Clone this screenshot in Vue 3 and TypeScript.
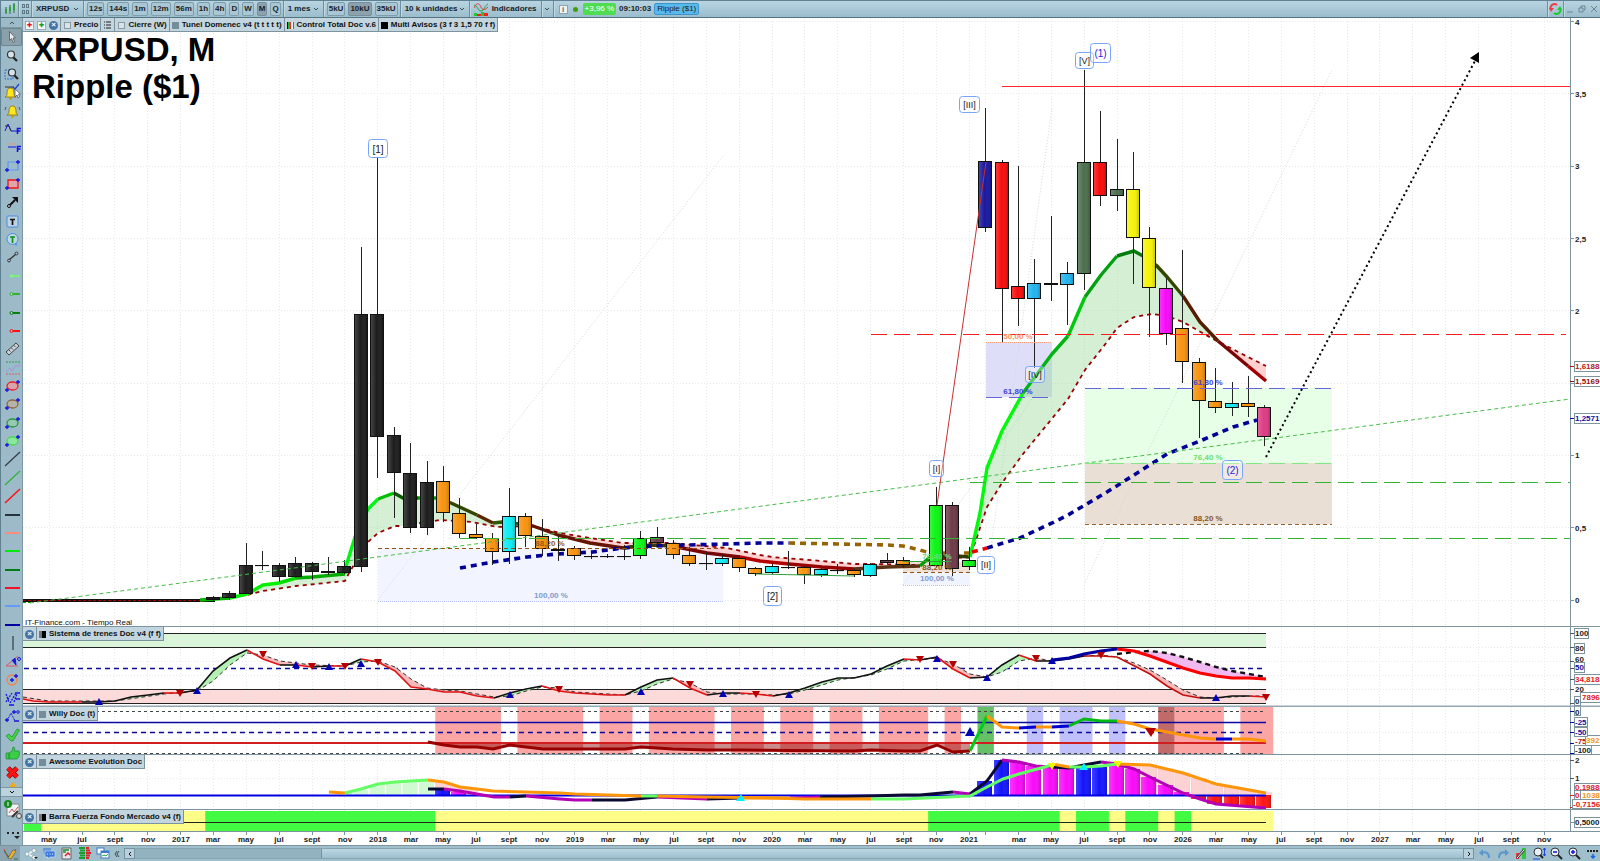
<script setup lang="ts">
import { ref } from 'vue'

type Pt = [number, number]
type Run = { c: string; p: string }

const step = 16.43
const xAt = (i: number): number => 180.6 + step * i
const yAt = (price: number): number => 600 - 144.6 * price

const parse = (s: string): Pt[] => s.trim().split(/\s+/).map((q) => q.split(',').map(Number) as Pt)
const valueAt = (line: Pt[], x: number): number => {
  for (let k = 1; k < line.length; k++) {
    if (x <= line[k][0]) {
      const [x0, y0] = line[k - 1]
      const [x1, y1] = line[k]
      return y0 + ((y1 - y0) * (x - x0)) / (x1 - x0)
    }
  }
  return line[line.length - 1][1]
}

const ticks: { x: number; t: string }[] = []
const cycle = ['', 'mar', 'may', 'jul', 'sept', 'nov']
for (let i = -8; i <= 48; i += 2) {
  const m = (((i % 12) + 12) % 12) / 2
  ticks.push({ x: xAt(i), t: m === 0 ? String(2017 + i / 12) : cycle[m] })
}
ticks.push({ x: xAt(49), t: '' })
for (let i = 51; i <= 83; i += 2) {
  const m = ((i - 49) % 12) / 2
  ticks.push({ x: xAt(i), t: m === 0 ? String(2025 + (i - 49) / 12) : cycle[m] })
}

const K = '#1c1c1c'
const O = '#f7930f'
const C = '#10ecf5'
const G = '#0cf516'
const P = '#6e3a48'
const B = '#22b4ee'
const D = '#4c6e4e'
const R = '#f80c0c'
const Y = '#f6f40a'
// index, body top, body bottom, high, low, colour
const candles: [number, number, number, number, number, string][] = [
  [2, 597, 600, 596, 601, K], [3, 593, 598, 591, 600, K], [4, 565, 594, 543, 594, K], [5, 565, 566, 551, 570, K],
  [6, 565, 577, 563, 582, K], [7, 563, 577, 557, 578, K], [8, 563, 572, 562, 580, K], [9, 571, 573, 557, 575, K],
  [10, 566, 573, 560, 574, K], [11, 314, 567, 247, 572, K], [12, 314, 437, 158, 478, K], [13, 435, 473, 427, 518, K],
  [14, 473, 528, 443, 533, K], [15, 482, 528, 461, 535, K], [16, 481, 513, 466, 522, O], [17, 513, 534, 498, 538, O],
  [18, 534, 538, 524, 539, O], [19, 538, 552, 533, 565, O], [20, 516, 552, 488, 564, C], [21, 516, 536, 513, 547, O],
  [22, 536, 549, 519, 556, O], [23, 549, 551, 535, 561, O], [24, 548, 556, 546, 560, O], [25, 556, 557, 553, 559, K],
  [26, 556, 557, 554, 558, K], [27, 556, 557, 545, 560, K], [28, 538, 556, 531, 559, G], [29, 537, 543, 527, 545, P],
  [30, 543, 555, 540, 559, O], [31, 555, 564, 547, 566, O], [32, 563, 564, 552, 570, K], [33, 558, 564, 555, 566, C],
  [34, 558, 568, 555, 572, O], [35, 568, 574, 567, 576, O], [36, 566, 573, 564, 574, C], [37, 567, 568, 551, 569, K],
  [38, 567, 575, 566, 584, O], [39, 569, 575, 568, 577, C], [40, 570, 571, 564, 574, K], [41, 570, 575, 569, 577, O],
  [42, 564, 576, 563, 577, C], [43, 560, 563, 553, 564, P], [44, 560, 565, 557, 568, O], [46, 505, 566, 487, 567, G],
  [47, 505, 569, 502, 576, P], [48, 560, 567, 547, 570, G], [49, 161, 228, 108, 232, '#1818a0'], [50, 162, 289, 160, 343, R],
  [51, 286, 299, 166, 326, R], [52, 283, 299, 259, 368, B], [53, 283, 285, 216, 301, '#a01010'], [54, 273, 285, 262, 325, B],
  [55, 162, 274, 70, 290, D], [56, 162, 196, 111, 206, R], [57, 189, 196, 139, 211, D], [58, 189, 238, 152, 284, Y],
  [59, 238, 288, 227, 337, Y], [60, 288, 334, 278, 345, '#f808f8'], [61, 328, 362, 250, 383, O], [62, 362, 401, 358, 438, O],
  [63, 401, 408, 368, 413, O], [64, 403, 408, 382, 416, C], [65, 403, 407, 376, 417, O], [66, 407, 437, 405, 446, '#dc3c84'],
]

const tunnel: Run[] = [
  { c: '#00b400', p: '200,600 230,598' },
  { c: '#00f000', p: '230,598 247,594 263,585 279,583' },
  { c: '#00dc00', p: '279,583 296,578' },
  { c: '#00aa00', p: '296,578 312,577 345,574' },
  { c: '#00f514', p: '345,574 347,563 355,537 368,509 378,499' },
  { c: '#00be00', p: '378,499 394,493' },
  { c: '#0a5a00', p: '394,493 403,498 418,498' },
  { c: '#00a000', p: '418,498 437,498' },
  { c: '#324600', p: '437,498 451,503 477,515' },
  { c: '#5a2800', p: '477,515 493,523' },
  { c: '#2d5a00', p: '493,523 502,522 520,524' },
  { c: '#641400', p: '520,524 533,526 558,535 590,543 623,548' },
  { c: '#3c3c00', p: '623,548 637,546 657,545 669,546' },
  { c: '#780505', p: '669,546 682,548 707,553 740,557' },
  { c: '#b40000', p: '740,557 760,561 789,564' },
  { c: '#960000', p: '789,564 822,567 854,569' },
  { c: '#5a3214', p: '854,569 871,568 887,567 920,566' },
  { c: '#00a000', p: '920,566 930,557' },
  { c: '#323c00', p: '930,557 957,556 970,557' },
  { c: '#00fa0a', p: '970,557 980,513 987,468 1002,431 1023,393' },
  { c: '#00b40f', p: '1023,393 1052,354 1068,336' },
  { c: '#00c80a', p: '1068,336 1085,297' },
  { c: '#00a00f', p: '1085,297 1101,275 1117,256' },
  { c: '#007d0a', p: '1117,256 1134,251 1143,256' },
  { c: '#324600', p: '1143,256 1157,266 1168,278 1183,296' },
  { c: '#551e00', p: '1183,296 1200,322 1218,341' },
  { c: '#780505', p: '1218,341 1248,366' },
  { c: '#a00000', p: '1248,366 1266,381' },
]
const stops = '200,601 247,595 263,591 296,586 345,581 349,573 368,542 378,533 395,526 402,526 427,522 440,520 472,522 497,527 533,526 560,533 590,538 623,543 668,543 682,544 727,548 760,555 772,557 822,561 854,564 871,564 920,565 930,560 970,557 977,537 987,507 1002,483 1023,454 1068,399 1085,370 1107,342 1117,328 1134,317 1152,314 1167,316 1183,322 1215,340 1248,357 1266,366'
const tunnelPts = tunnel.flatMap((r) => parse(r.p))
const stopPts = parse(stops)
const between = (a: Pt[], b: Pt[], from: number, to: number): string => {
  const xs = [...new Set([...a, ...b].map((q) => q[0]).concat([from, to]))].filter((x) => x >= from && x <= to).sort((m, n) => m - n)
  const up = xs.map((x) => `${x},${valueAt(a, x).toFixed(1)}`)
  const down = xs.reverse().map((x) => `${x},${valueAt(b, x).toFixed(1)}`)
  return [...up, ...down].join(' ')
}
const clouds = [
  { c: '#96d796', p: between(tunnelPts, stopPts, 247, 510) },
  { c: '#ff8c8c', p: between(tunnelPts, stopPts, 533, 915) },
  { c: '#96d796', p: between(tunnelPts, stopPts, 970, 1216) },
  { c: '#ff8c8c', p: between(tunnelPts, stopPts, 1217, 1266) },
]
const slow: Run[] = [
  { c: '#000096', p: '460,568 493,562 527,557 557,554 593,552 623,548 653,546 687,545 727,544 760,543 789,543' },
  { c: '#966400', p: '789,543 838,544 887,545 903,546 920,550 930,553 970,553' },
  { c: '#f00000', p: '972,552 987,548' },
  { c: '#000096', p: '987,548 1020,538 1052,523 1068,515 1085,505 1107,492 1123,482 1167,454 1200,441 1233,427 1257,420' },
]

const waves = [
  { x: 368, y: 139, w: 20, h: 19, t: '[1]', s: 10, c: '#222' },
  { x: 763, y: 586, w: 19, h: 20, t: '[2]', s: 10, c: '#222' },
  { x: 929, y: 460, w: 15, h: 17, t: '[I]', s: 9, c: '#222' },
  { x: 977, y: 556, w: 18, h: 18, t: '[II]', s: 9, c: '#222' },
  { x: 959, y: 96, w: 21, h: 17, t: '[III]', s: 9, c: '#222' },
  { x: 1025, y: 366, w: 20, h: 17, t: '[IV]', s: 9, c: '#222' },
  { x: 1075, y: 52, w: 19, h: 17, t: '[V]', s: 9, c: '#222' },
  { x: 1090, y: 43, w: 21, h: 20, t: '(1)', s: 10, c: '#2a1ae0' },
  { x: 1222, y: 460, w: 21, h: 20, t: '(2)', s: 10, c: '#2a1ae0' },
]
const fibs = [
  { x: 550, y: 546, t: '88,20 %', c: '#965a14' },
  { x: 551, y: 598, t: '100,00 %', c: '#8099cf' },
  { x: 1018, y: 339, t: '50,00 %', c: '#ff9058' },
  { x: 1018, y: 394, t: '61,80 %', c: '#4040d8' },
  { x: 1208, y: 385, t: '61,80 %', c: '#4040e0' },
  { x: 1208, y: 460, t: '76,40 %', c: '#6fdc6f' },
  { x: 1208, y: 521, t: '88,20 %', c: '#87561c' },
  { x: 937, y: 559, t: '76,40 %', c: '#6fdc6f' },
  { x: 937, y: 570, t: '88,20 %', c: '#87561c' },
  { x: 937, y: 581, t: '100,00 %', c: '#8099cf' },
]
const prices = [4, 3.5, 3, 2.5, 2, 1.5, 1, 0.5, 0]
const priceText = (v: number): string => (v === 1.5 ? '' : String(v).replace('.', ','))
const priceTags = [
  { y: 366, t: '1,6188', c: '#b01818' },
  { y: 381, t: '1,5169', c: '#901010' },
  { y: 418, t: '1,2571', c: '#1010a0' },
]

const trend: Run[] = [
  { c: '#e01414', p: '23,699 33,701 49,702 82,702' },
  { c: '#111', p: '82,702 99,702 115,701 131,697 148,695 164,693' },
  { c: '#e01414', p: '164,693 180,693' },
  { c: '#111', p: '180,693 197,690 213,671 230,658 247,650' },
  { c: '#e01414', p: '247,650 263,659 280,665' },
  { c: '#111', p: '280,665 296,665' },
  { c: '#e01414', p: '296,665 312,667' },
  { c: '#111', p: '312,667 329,666' },
  { c: '#e01414', p: '329,666 345,666' },
  { c: '#111', p: '345,666 361,659' },
  { c: '#e01414', p: '361,659 378,662 395,671 411,687 427,689 444,692 460,692 477,696 494,698' },
  { c: '#111', p: '494,698 510,693 526,689 542,686' },
  { c: '#e01414', p: '542,686 559,691 575,693 608,695 625,695' },
  { c: '#111', p: '625,695 641,687 657,680 673,678' },
  { c: '#e01414', p: '673,678 690,688 707,695' },
  { c: '#111', p: '707,695 723,693 740,693' },
  { c: '#e01414', p: '740,693 756,694 773,696' },
  { c: '#111', p: '773,696 789,693 805,688 822,682 838,678 854,678 871,674 887,666 904,659' },
  { c: '#e01414', p: '904,659 920,660' },
  { c: '#111', p: '920,660 937,657' },
  { c: '#e01414', p: '937,657 953,669 970,678' },
  { c: '#111', p: '970,678 987,677 1002,665 1019,655' },
  { c: '#e01414', p: '1019,655 1036,661' },
  { c: '#111', p: '1036,661 1052,661 1069,659 1084,656' },
  { c: '#c01010', p: '1084,656 1101,656 1117,657 1150,674 1167,686 1183,695 1200,698' },
  { c: '#111', p: '1200,698 1216,698 1232,696 1249,696' },
  { c: '#e01414', p: '1249,696 1266,697' },
]
const signal = '23,697 49,701 115,701 164,694 197,691 213,681 230,665 247,653 263,655 280,661 312,665 345,666 361,662 378,661 395,667 411,679 427,688 444,690 460,691 477,694 494,697 510,696 526,691 542,687 559,688 575,692 625,695 641,691 657,684 673,679 690,683 707,692 723,694 756,694 773,695 789,694 805,690 822,685 838,680 871,675 887,669 904,661 937,658 953,664 970,674 987,677 1002,672 1019,661 1036,658 1052,661 1084,656 1101,655 1117,657 1134,663 1150,670 1167,680 1183,690 1200,697 1216,698 1249,696 1266,696'
const signalPts = parse(signal)
const trendPts = trend.flatMap((r) => parse(r.p))
const trendFill = trendPts.slice(1).map((q, k) => {
  const a = trendPts[k]
  const s0 = valueAt(signalPts, a[0])
  const s1 = valueAt(signalPts, q[0])
  return { c: a[1] + q[1] < s0 + s1 ? '#b4f0b4' : '#f5b9b9', p: `${a[0]},${a[1]} ${q[0]},${q[1]} ${q[0]},${s1} ${a[0]},${s0}` }
})
const bigFast: Run[] = [
  { c: '#0000a0', p: '1052,660 1069,658 1084,654 1101,651 1117,649' },
  { c: '#fa0000', p: '1117,649 1134,651 1150,656 1183,668 1200,673 1216,676 1232,678 1249,678 1266,679' },
]
const bigSlow = '1117,654 1134,652 1150,651 1167,653 1183,657 1200,662 1216,667 1232,671 1249,674 1266,677'
const bigFill = between(parse(bigSlow), parse(bigFast[1].p), 1134, 1266)
const downs = parse('180,693 263,654 312,666 345,666 378,662 559,689 690,684 756,694 920,659 953,664 1036,658 1101,655 1266,697')
const ups = parse('99,702 197,691 296,665 329,667 361,664 510,695 641,692 723,694 789,695 937,659 987,678 1052,661 1216,698')

const zones: { a: number; b: number; c: string }[] = [
  ...([[16, 19], [21, 24], [26, 27], [29, 32], [34, 35], [37, 38], [40, 41], [43, 45], [47, 47], [61, 63], [65, 66]] as Pt[])
    .map(([a, b]) => ({ a, b, c: '#fba5a5' })),
  { a: 49, b: 49, c: '#66c066' },
  ...([[52, 52], [54, 55], [57, 57]] as Pt[]).map(([a, b]) => ({ a, b, c: '#c0c0fb' })),
  { a: 60, b: 60, c: '#c06a6a' },
]
const willyLow = '428,742 444,745 460,747 477,747 493,749 510,745 526,747 543,749 625,749 641,747 673,749 707,750 740,750 854,751 871,750 904,751 920,751 937,745 953,752 970,751'
const willy: Run[] = [
  { c: '#960000', p: willyLow },
  { c: '#00cd14', p: '970,751 987,716' },
  { c: '#ff960a', p: '987,716 1002,727 1019,728' },
  { c: '#0000d2', p: '1019,728 1036,727' },
  { c: '#ff960a', p: '1036,727 1052,727' },
  { c: '#0000d2', p: '1052,727 1069,726' },
  { c: '#00b914', p: '1069,726 1084,719 1101,721 1117,721' },
  { c: '#ff960a', p: '1117,721 1134,724 1150,729 1167,732 1200,738 1216,739' },
  { c: '#0000d2', p: '1216,739 1232,739' },
  { c: '#ff960a', p: '1232,739 1249,739 1266,741' },
]

const slowAo: Run[] = [
  { c: '#ff960a', p: '329,792 345,793' },
  { c: '#64ff64', p: '345,793 361,789 378,784 395,782 411,781 428,780' },
  { c: '#ff960a', p: '428,780 444,782 460,787 477,789 493,791 560,793 575,794 641,796' },
  { c: '#64ff64', p: '641,796 657,796' },
  { c: '#ff960a', p: '657,796 705,797 773,798 805,799 871,799' },
  { c: '#64ff64', p: '871,799 904,799 970,796 987,787 1003,779 1019,774 1052,765' },
  { c: '#ff960a', p: '1052,764 1069,767' },
  { c: '#64ff64', p: '1069,767 1084,767 1101,766 1117,764' },
  { c: '#ff960a', p: '1117,764 1150,765 1183,773 1216,784 1266,793' },
]
const fastAo: Run[] = [
  { c: '#0a0a32', p: '428,789 444,789' },
  { c: '#b400b4', p: '444,789 460,791 477,794 494,797 510,797' },
  { c: '#0a0a32', p: '510,797 526,796' },
  { c: '#b400b4', p: '526,796 560,799 575,800 592,800' },
  { c: '#0a0a32', p: '592,800 625,800 657,797' },
  { c: '#b400b4', p: '657,797 707,799' },
  { c: '#0a0a32', p: '707,799 740,798' },
  { c: '#ff960a', p: '740,798 790,798' },
  { c: '#b400b4', p: '790,798 820,797' },
  { c: '#0a0a32', p: '820,797 870,796 904,795 920,795 953,792' },
  { c: '#b400b4', p: '953,792 970,794' },
  { c: '#0a0a32', p: '970,794 987,781 1002,760' },
  { c: '#b400b4', p: '1002,760 1019,762 1036,766 1052,767' },
  { c: '#0a0a32', p: '1052,767 1069,768 1084,765 1101,762' },
  { c: '#b400b4', p: '1101,762 1117,764 1134,769 1150,777 1183,793 1200,799 1216,804 1266,808' },
]
const histo: [number, number, number, string][] = [
  [16, 790, 795, '#1414ff'], [17, 792, 795, '#fa0afa'], [49, 781, 795, '#1414ff'], [50, 760, 795, '#1414ff'],
  [51, 762, 795, '#fa0afa'], [52, 766, 795, '#fa0afa'], [53, 767, 795, '#fa0afa'], [54, 768, 795, '#fa0afa'],
  [55, 767, 795, '#1414ff'], [56, 767, 795, '#1414ff'], [57, 764, 795, '#fa0afa'], [58, 769, 795, '#fa0afa'],
  [59, 777, 795, '#fa0afa'], [60, 785, 795, '#fa0afa'], [61, 792, 795, '#fa0afa'], [62, 795, 799, '#ff1414'],
  [63, 795, 804, '#ff1414'], [64, 795, 806, '#ff1414'], [65, 795, 807, '#ff1414'], [66, 795, 808, '#ff1414'],
]
const aoOrange = parse(slowAo[8].p)
const pale: [number, number][] = [58, 59, 60, 61, 62, 63, 64, 65, 66].map((i) => [i, valueAt(aoOrange, xAt(i))])
const mint = parse('10,793 11,790 12,785 13,783 14,781 15,780')
const force: Pt[] = [[2, 15], [46, 53], [55, 56], [58, 59], [61, 61]]

const frames = ['12s', '144s', '1m', '12m', '56m', '1h', '4h', 'D', 'W', 'M', 'Q']
const frame = ref('M')
const sizes = ['5kU', '10kU', '35kU']
const size = ref('10kU')
const tool = ref(0)

const line = (c: string) => `<path d="M4 9H19" stroke="${c}" stroke-width="2"/>`
const ray = (c: string) => `<path d="M9 9H19" stroke="${c}" stroke-width="2"/><circle cx="10.500" cy="9" r="1.500" fill="#b8ced8" stroke="${c}"/>`
const slant = (c: string, w: number) => `<path d="M4 16L19 2" stroke="${c}" stroke-width="${w}"/>`
const plus = (x: number, y: number) => `<path d="M${x - 2} ${y}h4M${x} ${y - 2}v4" stroke="#1414e0" stroke-width="1.300"/>`
const blob = (c: string, f: string) => `<ellipse cx="11.500" cy="9" rx="5.500" ry="4" fill="${f}" stroke="${c}" stroke-width="1.300"/>${plus(6, 13)}${plus(17, 5)}`
const bell = '<path d="M6 13c2-1 2-2 2-4 0-3 1-5 3.500-5s3.500 2 3.500 5c0 2 0 3 2 4z" fill="#ffe61e" stroke="#8c6e00" stroke-width=".8"/><circle cx="11.500" cy="14.500" r="1.300" fill="#c89600"/>'
const lens = '<circle cx="10" cy="7.500" r="3.500" fill="#d5e4ea" stroke="#333" stroke-width="1.200"/><path d="M12.500 10.500L16 14" stroke="#222" stroke-width="2.200"/>'
const tools: { n: string; g: string }[] = [
  { n: 'Puntero', g: '<path d="M8.500 3.500v9l2-2 1.500 4 1.500-.7-1.500-3.800h2.500z" fill="#e8eef2" stroke="#555" stroke-width=".8"/>' },
  { n: 'Lupa', g: lens },
  { n: 'Zoom de zona', g: `<path d="M4 5h8v9H4z" fill="none" stroke="#2878d2" stroke-dasharray="2 1"/><g transform="translate(1 0)">${lens}</g>` },
  { n: 'Alerta sobre objeto', g: `<g transform="translate(-2 1)">${bell}</g><path d="M4 4h9" stroke="#333"/><path d="M12 4l2 2 4-5" stroke="#1e46d2" stroke-width="1.300"/><path d="M14 6v8l2-2 1 3 1.500-1-1-3h2z" fill="#fff" stroke="#557" stroke-width=".8"/>` },
  { n: 'Alerta', g: `${bell}<path d="M5 5l-1 3M18 5l1 3" stroke="#555"/>` },
  { n: 'Fibonacci zigzag', g: '<path d="M4 11l3-7 3 7h6" stroke="#1414e0"/><path d="M4 6h4l2 5" stroke="#333"/><path d="M16.500 14V8.500h3.500M16.500 11h3" stroke="#1414e0" stroke-width="1.600"/>' },
  { n: 'Fibonacci horizontal', g: '<path d="M7 6h10" stroke="#ff8c5a" stroke-dasharray="2 1"/><path d="M7 9h8" stroke="#1414e0"/><path d="M16.500 14V8.500H20M16.500 11h3" stroke="#1414e0" stroke-width="1.600"/>' },
  { n: 'Rectángulo azul', g: `<path d="M7 5h10v8H7z" fill="none" stroke="#5a96f5" stroke-width="1.200"/>${plus(6, 13)}${plus(17, 5)}` },
  { n: 'Rectángulo rojo', g: `<path d="M7 5h10v8H7z" fill="#e0a5aa" stroke="#f01414" stroke-width="1.300"/>${plus(6, 13)}${plus(17, 5)}` },
  { n: 'Flecha', g: '<path d="M8 13l6-6" stroke="#111" stroke-width="2"/><path d="M11 4h6v6z" fill="#111"/><circle cx="8" cy="13" r="1.500" fill="#b8ced8" stroke="#111"/>' },
  { n: 'Texto', g: '<rect x="6" y="4" width="11" height="11" rx="1" fill="#bcd2e0" stroke="#4b8ce6"/><path d="M9 7.500h5M11.500 7v6" stroke="#111" stroke-width="1.700"/>' },
  { n: 'Comentario', g: '<circle cx="11.500" cy="9" r="5.500" fill="#bcd8e0" stroke="#4b8ce6"/><path d="M13 14l3 2-.5-3" fill="#4b8ce6"/><path d="M9 7h5M11.500 7v6" stroke="#148c1e" stroke-width="1.700"/>' },
  { n: 'Segmento', g: '<path d="M8 12l7-6" stroke="#333" stroke-width="1.300"/><circle cx="8" cy="12.500" r="1.400" fill="#b8ced8" stroke="#333"/><circle cx="15.500" cy="5.500" r="1.400" fill="#b8ced8" stroke="#333"/>' },
  { n: 'Rayo verde claro', g: ray('#78f078') },
  { n: 'Rayo verde', g: ray('#32b432') },
  { n: 'Rayo verde oscuro', g: ray('#0a7d14') },
  { n: 'Rayo rojo', g: ray('#fa1414') },
  { n: 'Regla', g: '<path d="M5 12L15 3l3 3L8 15z" fill="#c8d2d8" stroke="#444"/><path d="M8 10l1.500 1.500M10.500 8l1.500 1.500M13 5.500l1.500 1.500" stroke="#444"/>' },
  { n: 'Patrón', g: '<rect x="5" y="3" width="14" height="12" fill="#96bec8"/><path d="M5 3h14" stroke="#3c9650" stroke-dasharray="2 1"/><path d="M5 15h14" stroke="#dc5a6e" stroke-dasharray="2 1"/><path d="M5 13l4-4 2 3 4-6 2 2 2-3" stroke="#b48cdc" fill="none"/>' },
  { n: 'Elipse roja', g: blob('#f01e28', '#d7a5aa') },
  { n: 'Elipse marrón', g: blob('#96643c', '#b4b4aa') },
  { n: 'Elipse verde', g: blob('#28963c', '#96c8b4') },
  { n: 'Elipse verde claro', g: blob('#46dc46', '#8ce6a0') },
  { n: 'Recta negra', g: slant('#333c46', 1.2) },
  { n: 'Recta verde', g: slant('#32b43c', 1.3) },
  { n: 'Recta roja', g: slant('#fa1414', 1.6) },
  { n: 'Horizontal negra', g: line('#28323c') },
  { n: 'Horizontal salmón', g: line('#fa8c78') },
  { n: 'Horizontal verde', g: line('#00eb0a') },
  { n: 'Horizontal verde oscuro', g: line('#007d14') },
  { n: 'Horizontal roja', g: line('#f01428') },
  { n: 'Horizontal azul', g: line('#649bfa') },
  { n: 'Horizontal marina', g: line('#0000a0') },
  { n: 'Vertical', g: '<path d="M12 2v14" stroke="#333c46" stroke-width="1.200"/>' },
  { n: 'Ángulo', g: '<path d="M17 4L5 14h12" fill="none" stroke="#e65064"/><path d="M11 8l4 5-1-7" fill="#1414e0" stroke="#1414e0"/><circle cx="18" cy="7" r="1.500" fill="none" stroke="#1414e0"/>' },
  { n: 'Círculo', g: `<circle cx="11" cy="9" r="5" fill="none" stroke="#f5824b" stroke-width="1.300"/>${plus(11, 9)}${plus(15, 5)}` },
  { n: 'Ondas de impulso', g: '<path d="M5 5l3 8M5 13l6-9M9 14l6-10M13 13l3-8" stroke="#1414e0" stroke-dasharray="2 1" stroke-width="1.300"/><path d="M14 4h5M15 10h4M8 16h5" stroke="#1414e0" stroke-width="1.500"/>' },
  { n: 'Ondas correctivas', g: `<path d="M6 14l4-8 4 8" stroke="#1414e0" stroke-dasharray="2 1" fill="none"/>${plus(13, 5)}${plus(6, 13)}<circle cx="17" cy="5" r="1.300" fill="none" stroke="#1414e0"/><path d="M13 14h5" stroke="#1414e0" stroke-width="1.500"/>` },
  { n: 'Marca válida', g: '<path d="M5 10l3-2 3 3 5-8 2.500 1L12 15h-2z" fill="#46d246" stroke="#1e963c" stroke-width=".8"/>' },
  { n: 'Pulgar arriba', g: '<path d="M5 9h3v6H5zM8 9l3-2 1-4c2 0 2 2 1.500 4H18c1 3 0 6-2 8H8z" fill="#3ccd46" stroke="#1e963c" stroke-width=".8"/>' },
  { n: 'Cruz roja', g: '<path d="M7 5l9 9M16 5l-9 9" stroke="#8c0000" stroke-width="5"/><path d="M7 5l9 9M16 5l-9 9" stroke="#fa1414" stroke-width="3.800"/>' },
]
</script>

<template>
  <div class="app">
    <header class="bar">
      <button class="flat candle-btn" aria-label="Tipo de gráfico">
        <svg width="12" height="14" viewBox="0 0 12 14"><path d="M2 5v7M6 3v9M10 1v10" stroke="#286e32" /><path d="M1 7h2v4H1zM5 5h2v4H5zM9 2h2v6H9z" fill="#32a03c" /></svg>
      </button>
      <i class="sep" />
      <button class="flat grip" aria-label="Vincular">
        <svg width="8" height="12" viewBox="0 0 8 12"><g fill="none" stroke="#5f7885"><rect x="1.500" y="1.500" width="2" height="3" /><rect x="5.500" y="1.500" width="2" height="3" /><rect x="1.500" y="7.500" width="2" height="3" /><rect x="5.500" y="7.500" width="2" height="3" /></g></svg>
      </button>
      <i class="sep" />
      <span class="pick w-symbol"><select aria-label="Valor"><option>XRPUSD</option></select><svg class="chev" viewBox="0 0 6 4"><path d="M1 1l2 2 2-2" /></svg></span>
      <i class="sep" />
      <div class="group">
        <button v-for="f in frames" :key="f" class="chip" :class="{ on: f === frame }" @click="frame = f">{{ f }}</button>
      </div>
      <i class="sep" />
      <span class="pick w-unit"><select aria-label="Unidad de tiempo"><option>1 mes</option></select><svg class="chev" viewBox="0 0 6 4"><path d="M1 1l2 2 2-2" /></svg></span>
      <i class="sep" />
      <div class="group">
        <button v-for="s in sizes" :key="s" class="chip" :class="{ on: s === size }" @click="size = s">{{ s }}</button>
      </div>
      <i class="sep" />
      <span class="pick w-amount"><select aria-label="Unidades"><option>10 k unidades</option></select><svg class="chev" viewBox="0 0 6 4"><path d="M1 1l2 2 2-2" /></svg></span>
      <i class="sep" />
      <button class="flat ind">
        <svg width="14" height="14" viewBox="0 0 14 14"><path d="M0 6c3-6 5-5 7-1s4 3 7 0" fill="none" stroke="#e63c46" /><path d="M0 3c3 0 4 6 7 6s4-6 7-7" fill="none" stroke="#28a03c" /><path d="M0 14v-3h3v3zM7 14v-4h3v4z" fill="#1ec832" /><path d="M3 14v-2h4v2zM10 14v-3h4v3z" fill="#fa1e1e" /></svg>
        Indicadores
      </button>
      <i class="sep" />
      <button class="flat drop" aria-label="Más indicadores"><svg class="chev" viewBox="0 0 6 4"><path d="M1 1l2 2 2-2" /></svg></button>
      <i class="sep" />
      <div class="status">
        <button class="info" aria-label="Información">i</button>
        <i class="live" />
        <span class="gain">+3,96 %</span>
        <span class="clock">09:10:03</span>
        <span class="asset">Ripple ($1)</span>
      </div>
      <span class="grow" />
      <i class="sep" />
      <button class="flat sync" aria-label="Sincronizar">
        <svg width="13" height="12" viewBox="0 0 13 12"><path d="M2 7a4 4 0 0 1 6-5" fill="none" stroke="#f03c46" stroke-width="2" /><path d="M0 5h5L2 9z" fill="#f03c46" /><path d="M11 5a4 4 0 0 1-6 5" fill="none" stroke="#1ec82d" stroke-width="2" /><path d="M13 7H8l3-4z" fill="#1ec82d" /></svg>
      </button>
      <i class="sep" />
      <div class="win">
        <button class="flat" aria-label="Minimizar"><svg viewBox="0 0 8 8"><path d="M1 7h6" /></svg></button>
        <button class="flat" aria-label="Restaurar"><svg viewBox="0 0 8 8"><path d="M3 3V1h4v4H6M1 3h4v4H1z" /></svg></button>
        <button class="flat" aria-label="Cerrar"><svg viewBox="0 0 8 8"><path d="M1 1l6 6M7 1L1 7" /></svg></button>
      </div>
    </header>

    <div class="body">
      <aside class="side">
        <button class="flat fold" aria-label="Subir"><svg class="chev" viewBox="0 0 6 4"><path d="M1 3l2-2 2 2" /></svg></button>
        <div class="tools">
          <button v-for="(t, k) in tools" :key="t.n" class="tool" :class="{ on: tool === k }" :aria-label="t.n" @click="tool = k">
            <svg width="22" height="18" viewBox="0 0 22 18" fill="none" v-html="t.g" />
          </button>
        </div>
        <div class="tip"><svg width="22" height="6" viewBox="0 0 22 6"><path d="M12 1l4 5H8z" fill="#f0aa14" /></svg></div>
        <button class="fold more" aria-label="Bajar"><svg class="chev dark" viewBox="0 0 6 4"><path d="M1 1l2 2 2-2" /></svg></button>
        <button class="flat tall" aria-label="Objetos">
          <svg width="20" height="22" viewBox="0 0 20 22"><path d="M8 5h9v12H5V9" fill="#eef3f5" stroke="#888" /><path d="M7 14l3-4 2 3 4-5" stroke="#c8505a" fill="none" /><path d="M10 18l6-6" stroke="#333" stroke-width="2" /><circle cx="17" cy="17" r="2.500" fill="#ddd" stroke="#444" /><circle cx="6" cy="5" r="4" fill="#148c1e" /><path d="M6 3v4" stroke="#fff" /></svg>
        </button>
        <button class="flat dots" aria-label="Más">
          <svg width="20" height="12" viewBox="0 0 20 12"><path d="M5 4h2v2H5zM10 4h2v2h-2zM15 4h2v2h-2zM12 8h6l-3 3z" fill="#222" /></svg>
        </button>
      </aside>

      <main class="charts">
        <section class="panel">
          <svg class="plot" viewBox="23 18 1577 609">
            <defs>
              <linearGradient id="shade"><stop offset="0" stop-color="#fff" stop-opacity=".18" /><stop offset=".5" stop-color="#fff" stop-opacity="0" /><stop offset="1" stop-color="#000" stop-opacity=".18" /></linearGradient>
            </defs>
            <rect x="23" y="18" width="1577" height="609" fill="#fff" />
            <g class="grid">
              <path v-for="t in ticks" :key="t.x" :d="`M${Math.floor(t.x)}.5 18V627`" />
              <path v-for="p in prices" :key="p" :d="`M23 ${Math.floor(yAt(p))}.5H1570`" />
            </g>
            <rect x="378" y="548" width="345" height="53" fill="#f2f5ff" />
            <rect x="903" y="562" width="67" height="10" fill="#eee0d4" />
            <rect x="903" y="572" width="67" height="13" fill="#f0f4ff" />
            <rect x="986" y="342" width="66" height="55" fill="#dedef8" />
            <rect x="1085" y="388" width="247" height="75" fill="#e6ffe6" />
            <rect x="1085" y="463" width="247" height="61" fill="#e9dfd5" />
            <g class="grid trace">
              <path d="M378 600L723 156M903 585L1052 370M987 575L1052 108M1085 582L1332 70" />
            </g>
            <polygon v-for="(c, k) in clouds" :key="k" :points="c.p" :fill="c.c" fill-opacity=".4" />
            <g fill="none">
              <path d="M23 600.500H215" stroke="#111" stroke-width="3" />
              <path d="M23 600.500H205" stroke="#a00000" stroke-dasharray="3 2" />
              <path d="M23 602.500H33" stroke="#00a000" stroke-dasharray="3 2" />
              <polyline :points="stops" stroke="#960000" stroke-width="1.8" stroke-dasharray="4 4" />
              <polyline v-for="(r, k) in tunnel" :key="k" :points="r.p" :stroke="r.c" stroke-width="3.400" stroke-linejoin="round" />
              <polyline v-for="(r, k) in slow" :key="'s' + k" :points="r.p" :stroke="r.c" stroke-width="3.600" stroke-dasharray="6 5" />
            </g>
            <g v-for="[i, top, bot, hi, lo, c] in candles" :key="i">
              <path :d="`M${Math.floor(xAt(i))}.5 ${hi}V${lo}`" stroke="#222" />
              <rect :x="Math.floor(xAt(i)) - 6.5" :y="top + 0.5" width="13" :height="Math.max(bot - top - 1, 0.1)" :fill="c" stroke="#111" />
              <rect v-if="bot - top > 4" :x="Math.floor(xAt(i)) - 6" :y="top + 1" width="12" :height="bot - top - 2" fill="url(#shade)" />
            </g>
            <g fill="none">
              <path d="M30 603L1570 399" stroke="#46be46" stroke-dasharray="4 3" />
              <path d="M756 574L854 576M903 561.500H952" stroke="#32a03c" />
              <path d="M460 538.500H1570M970 482.500H1570" stroke="#32b432" stroke-dasharray="16 7" />
              <path d="M871 334.500H1566" stroke="#fa1e1e" stroke-dasharray="16 7" />
              <path d="M1002 86.500H1570" stroke="#fa2828" />
              <path d="M937 505L986 162" stroke="#c83232" />
              <path d="M378 548.500H723M903 572.500H970" stroke="#965014" stroke-dasharray="4 3" />
              <path d="M378 601.500H723M903 585.500H970" stroke="#b4c3ff" stroke-dasharray="1 1" />
              <path d="M986 342.500H1052" stroke="#ffa078" stroke-dasharray="1 1" />
              <path d="M986 397.500H1050M1085 388.500H1332" stroke="#6464dc" stroke-dasharray="16 7" />
              <path d="M1085 463.500H1332" stroke="#82e682" stroke-dasharray="16 7" />
              <path d="M1085 524.500H1332" stroke="#966432" stroke-dasharray="4 3" />
              <path d="M1266 457L1476 59" stroke="#000" stroke-width="2" stroke-dasharray="2 3" />
            </g>
            <path d="M1470 58L1479 52V63z" fill="#000" />
            <text v-for="(f, k) in fibs" :key="'f' + k" class="b mid" :x="f.x" :y="f.y" :fill="f.c">{{ f.t }}</text>
            <g v-for="w in waves" :key="w.t">
              <rect :x="w.x + 0.5" :y="w.y + 0.5" :width="w.w - 1" :height="w.h - 1" rx="3" fill="#fff" fill-opacity=".35" stroke="#78a5fa" />
              <text class="mid" :class="w.s === 10 ? 'big' : 'small'" :x="w.x + w.w / 2" :y="w.y + w.h / 2 + (w.s === 10 ? 4 : 3)" :fill="w.c">{{ w.t }}</text>
            </g>
            <text x="25" y="625" fill="#111">IT-Finance.com - Tiempo Real</text>
            <path d="M1570.500 18V627M23 626.500H1600" stroke="#7d949f" />
            <g v-for="p in prices" :key="'p' + p">
              <path :d="`M1570 ${Math.floor(yAt(p))}.5h4`" stroke="#7d949f" />
              <text class="b" x="1575" :y="Math.round(yAt(p)) + 3" fill="#222">{{ priceText(p) }}</text>
            </g>
            <g v-for="g in priceTags" :key="g.t">
              <path :d="`M1570 ${g.y}.5h5`" :stroke="g.c" />
              <rect x="1574.500" :y="g.y - 4.5" width="27" height="10" fill="#fff" stroke="#7d949f" />
              <text class="b" x="1575" :y="g.y + 3" :fill="g.c">{{ g.t }}</text>
            </g>
          </svg>
          <nav class="heads">
            <span class="head icons">
              <button class="mini red" aria-label="Añadir debajo">✚</button>
              <button class="mini green" aria-label="Añadir">✚</button>
              <button class="close" aria-label="Cerrar panel">×</button>
            </span>
            <label class="head"><input type="checkbox" />Precio</label>
            <button class="head list" aria-label="Lista"><svg width="7" height="8" viewBox="0 0 7 8"><path d="M0 1h1M2 1h5M0 4h1M2 4h5M0 7h1M2 7h5" stroke="#222" /></svg></button>
            <label class="head"><input type="checkbox" />Cierre (W)</label>
            <span class="head"><i class="sw" />Tunel Domenec v4 (t t t t t)</span>
            <span class="head"><i class="sw multi" />Control Total Doc v.6</span>
            <span class="head"><i class="sw black" />Multi Avisos (3 f 3 1,5 70 f f)</span>
          </nav>
          <h1>XRPUSD, M<br />Ripple ($1)</h1>
        </section>

        <section class="panel">
          <svg class="plot" viewBox="23 627 1577 80">
            <rect x="23" y="627" width="1577" height="80" fill="#fff" />
            <rect x="23" y="634" width="1243" height="13" fill="#daf5da" />
            <rect x="23" y="690" width="1243" height="14" fill="#fddada" />
            <g class="grid">
              <path v-for="t in ticks" :key="t.x" :d="`M${Math.floor(t.x)}.5 628V706`" />
              <path d="M23 661.500H1570M23 675.500H1570M1266 647.500H1570M1266 689.500H1570" />
            </g>
            <path d="M23 633.500H1266M23 647.500H1266M23 689.500H1266M23 703.500H1266" stroke="#222" />
            <path d="M24 668.500H1266" stroke="#0a0aa0" stroke-width="1.600" stroke-dasharray="5 4" />
            <polygon v-for="(f, k) in trendFill" :key="k" :points="f.p" :fill="f.c" />
            <polygon :points="bigFill" fill="#f0b9f0" />
            <g fill="none">
              <polyline :points="signal" stroke="#333" stroke-dasharray="4 3" />
              <polyline v-for="(r, k) in trend" :key="k" :points="r.p" :stroke="r.c" stroke-width="1.6" />
              <polyline :points="bigSlow" stroke="#111" stroke-width="2.400" stroke-dasharray="5 4" />
              <polyline v-for="(r, k) in bigFast" :key="'b' + k" :points="r.p" :stroke="r.c" stroke-width="3" />
            </g>
            <path v-for="[x, y] in downs" :key="'d' + x" :d="`M${x - 4} ${y - 3}h8l-4 7z`" fill="#b40000" />
            <path v-for="[x, y] in ups" :key="'u' + x" :d="`M${x - 4} ${y + 3}h8l-4-7z`" fill="#0000b4" />
            <path d="M1570.500 627V707" stroke="#7d949f" />
            <path d="M23 706.500H1600" stroke="#93a8b2" stroke-width="2" />
            <path d="M1570 633.500h4M1570 647.500h4M1570 661.500h4M1570 668.500h4M1570 679.500h4M1570 689.500h4M1570 703.500h4" stroke="#556" />
            <g class="tags">
              <text class="b" x="1575" y="662" fill="#222">60</text>
              <rect x="1574.500" y="628.500" width="14" height="10" /><text class="b" x="1575" y="636" fill="#222">100</text>
              <rect x="1574.500" y="643.500" width="10" height="10" /><text class="b" x="1575" y="651" fill="#222">80</text>
              <rect x="1574.500" y="662.500" width="10" height="10" /><text class="b" x="1575" y="670" fill="#1010a0">50</text>
              <text class="b" x="1575" y="692" fill="#222">20</text>
              <rect x="1574.500" y="674.500" width="28" height="10" /><text class="b" x="1575" y="682" fill="#e02020">34,818</text>
              <rect x="1580.500" y="692.500" width="28" height="10" /><text class="b" x="1582" y="700" fill="#e02020">7896</text>
              <rect x="1574.500" y="696.500" width="6" height="9" /><text class="b" x="1575" y="704" fill="#222">0</text>
            </g>
          </svg>
          <div class="heads"><span class="head"><button class="close" aria-label="Cerrar Sistema de trenes">×</button></span><span class="head"><i class="sw half" />Sistema de trenes Doc v4 (f f)</span></div>
        </section>

        <section class="panel">
          <svg class="plot" viewBox="23 707 1577 48">
            <rect x="23" y="707" width="1577" height="48" fill="#fff" />
            <g class="grid">
              <path v-for="t in ticks" :key="t.x" :d="`M${Math.floor(t.x)}.5 707V755`" />
              <path d="M23 732.500H1570" />
            </g>
            <rect v-for="z in zones" :key="z.a" :x="xAt(z.a - 0.5)" y="707" :width="(z.b - z.a + 1) * step" height="48" :fill="z.c" />
            <polygon :points="'428,743 ' + willyLow + ' 970,743'" fill="#8c0000" fill-opacity=".45" />
            <path d="M24 711.500H1264M24 753.500H1264" stroke="#444" stroke-width="1" stroke-dasharray="3 3" />
            <path d="M24 732.500H1266" stroke="#0a0a96" stroke-width="1.600" stroke-dasharray="5 4" />
            <path d="M23 722.500H1266" stroke="#0a0aa0" stroke-width="1.600" />
            <path d="M23 743H1266" stroke="#d21e1e" stroke-width="2" />
            <polyline v-for="(r, k) in willy" :key="k" :points="r.p" :stroke="r.c" stroke-width="3" fill="none" />
            <path d="M965 736h10l-5-9z" fill="#0000b4" />
            <path d="M1145 728h11l-5 9z" fill="#b40000" />
            <path d="M1570.500 707V755M23 754.500H1600" stroke="#7d949f" />
            <path d="M1570 711.500h4M1570 722.500h4M1570 732.500h4M1570 743.500h4M1570 753.500h4" stroke="#0a0aa0" />
            <g class="tags">
              <rect x="1574.500" y="706.500" width="6" height="9" /><text class="b" x="1575" y="715" fill="#222">0</text>
              <text class="b" x="1575" y="744" fill="#b01818">-75</text>
              <rect x="1585.500" y="735.500" width="20" height="10" /><text class="b" x="1586" y="743" fill="#f0960a">392</text>
              <rect x="1574.500" y="717.500" width="13" height="9" /><text class="b" x="1575" y="725" fill="#1010a0">-25</text>
              <rect x="1574.500" y="727.500" width="13" height="9" /><text class="b" x="1575" y="735" fill="#1010a0">-50</text>
              <rect x="1574.500" y="745.500" width="17" height="9" /><text class="b" x="1575" y="753" fill="#222">-100</text>
            </g>
          </svg>
          <div class="heads"><span class="head"><button class="close" aria-label="Cerrar Willy">×</button></span><span class="head"><i class="sw" />Willy Doc (t)</span></div>
        </section>

        <section class="panel">
          <svg class="plot" viewBox="23 755 1577 55">
            <rect x="23" y="755" width="1577" height="55" fill="#fff" />
            <g class="grid">
              <path v-for="t in ticks" :key="t.x" :d="`M${Math.floor(t.x)}.5 755V810`" />
              <path d="M23 760.500H1570M23 778.500H1570" />
            </g>
            <rect v-for="[i, y] in mint" :key="'m' + i" :x="xAt(i) - 8" :y="y" width="15" :height="795 - y" fill="#d2fad2" />
            <rect v-for="[i, y] in pale" :key="'q' + i" :x="xAt(i) - 8" :y="y" width="15" :height="795 - y" fill="#fdd2d2" stroke="#ebbebe" stroke-width=".5" />
            <path d="M435 782h10l16 5 17 3v2h-43z" fill="#fdd2d2" />
            <g v-for="[i, a, b, c] in histo" :key="i">
              <rect :x="Math.floor(xAt(i)) - 8" :y="a" width="15" :height="b - a" :fill="c" />
              <rect :x="Math.floor(xAt(i)) - 8" :y="a" width="15" :height="b - a" fill="url(#shade)" />
            </g>
            <path d="M23 795.500H1266" stroke="#0000e6" stroke-width="2" />
            <g fill="none" stroke-width="3">
              <polyline v-for="(r, k) in fastAo" :key="k" :points="r.p" :stroke="r.c" />
              <polyline v-for="(r, k) in slowAo" :key="'o' + k" :points="r.p" :stroke="r.c" />
            </g>
            <path d="M736 801h9l-4-7zM1079 770h9l-4-7z" fill="#00f0fa" />
            <path d="M1048 763h8l-4 7zM1113 761h9l-4 7z" fill="#f5f500" />
            <path d="M1570.500 755V810M23 809.500H1600" stroke="#7d949f" />
            <path d="M1570 760.500h4M1570 778.500h4" stroke="#556" />
            <path d="M1570 795.500h4M1570 807.500h4" stroke="#e02020" />
            <g class="tags">
              <text class="b" x="1575" y="763" fill="#222">2</text>
              <text class="b" x="1575" y="781" fill="#222">1</text>
              <rect x="1574.500" y="783.500" width="28" height="10" /><text class="b" x="1575" y="790" fill="#e02020">0,1988</text>
              <rect x="1580.500" y="790.500" width="28" height="9" /><text class="b" x="1582" y="798" fill="#f0960a">1038</text>
              <rect x="1574.500" y="790.500" width="6" height="9" /><text class="b" x="1575" y="798" fill="#e02020">0</text>
              <rect x="1572.500" y="799.500" width="28" height="9" /><text class="b" x="1573" y="807" fill="#e02020">-0,7156</text>
            </g>
          </svg>
          <div class="heads"><span class="head"><button class="close" aria-label="Cerrar Awesome">×</button></span><span class="head"><i class="sw" />Awesome Evolution Doc</span></div>
        </section>

        <section class="panel">
          <svg class="plot" viewBox="23 810 1577 35">
            <rect x="23" y="810" width="1577" height="35" fill="#fff" />
            <g class="grid"><path v-for="t in ticks" :key="t.x" :d="`M${Math.floor(t.x)}.5 810V831`" /></g>
            <rect x="41" y="811" width="1232" height="20" fill="#fdfd87" />
            <rect x="24" y="811" width="17" height="20" fill="#41fa41" />
            <rect v-for="[a, b] in force" :key="a" :x="xAt(a - 0.5)" y="811" :width="(b - a + 1) * step" height="20" fill="#41fa41" />
            <path d="M23 822.500H1266" stroke="#222" />
            <path d="M23 831.500H1600M1570.500 810V832M1570 822.500h4" stroke="#7d949f" />
            <g v-for="t in ticks" :key="'t' + t.x">
              <path :d="`M${Math.floor(t.x)}.5 832v3`" stroke="#7d949f" />
              <text class="b mid" :x="Math.round(t.x)" y="842" fill="#222">{{ t.t }}</text>
            </g>
            <g class="tags"><rect x="1574.500" y="817.500" width="28" height="10" /><text class="b" x="1575" y="825" fill="#222">0,5000</text></g>
          </svg>
          <div class="heads"><span class="head"><button class="close" aria-label="Cerrar Barra Fuerza">×</button></span><span class="head"><i class="sw half" />Barra Fuerza Fondo Mercado v4 (f)</span></div>
        </section>
      </main>
    </div>

    <footer class="foot">
      <button class="flat draw" aria-label="Dibujo"><svg width="15" height="13" viewBox="0 0 15 13"><path d="M1 2l4 9 8-9" fill="none" stroke="#c83c46" /><path d="M5 11l5-8 3 1-5 8z" fill="#f5b41e" stroke="#555" stroke-width=".6" /><path d="M1 4l5 6M11 12h4" stroke="#287832" /></svg></button>
      <button class="flat" aria-label="Compartir"><svg width="14" height="12" viewBox="0 0 14 12"><path d="M11 2L4 6l7 4" fill="none" stroke="#f2f6f8" stroke-width="1.500" /><g fill="#f2f6f8" stroke="#6a7f89" stroke-width=".5"><circle cx="10" cy="2.500" r="2" /><circle cx="3" cy="6" r="2" /><circle cx="10" cy="9.500" r="2" /></g><path d="M10 9h4l-2 2z" fill="#222" /></svg></button>
      <button class="flat" aria-label="Comentarios"><svg width="14" height="13" viewBox="0 0 14 13"><path d="M1 1h8v5H4L2 8z" fill="#6496dc" /><path d="M3 4h10v6H8l-2 2V10H3z" fill="#3c78dc" stroke="#dce8fa" stroke-width=".6" /><path d="M5 7h1M7.500 7h1M10 7h1" stroke="#fff" /></svg></button>
      <button class="flat" aria-label="Informe"><svg width="14" height="13" viewBox="0 0 14 13"><path d="M2 1h9v11H2z" fill="#e6e6e6" stroke="#666" /><path d="M3 3h6M3 5h3" stroke="#1e8c28" stroke-width="1.500" /><path d="M5 9l3-3 2 2" stroke="#d21e28" stroke-width="1.500" fill="none" /></svg></button>
      <button class="flat" aria-label="Libro de órdenes"><svg width="14" height="13" viewBox="0 0 14 13"><path d="M1 1h6M2 3.500h5M1 6h6M2 8.500h5M1 11h6" stroke="#14a028" stroke-width="2" /><path d="M8 1h3M8 3.500h4M8 6h5M8 8.500h4M8 11h3" stroke="#e61e28" stroke-width="2" /></svg></button>
      <button class="flat" aria-label="Ventanas"><svg width="14" height="13" viewBox="0 0 14 13"><g fill="#fff" stroke="#3c78c8"><rect x="1" y="1" width="7" height="6" /><rect x="5" y="4" width="8" height="7" /></g><path d="M5 5h8" stroke="#3c78c8" stroke-width="2" /><path d="M6 9l2-1 2 1 2-2" stroke="#28a03c" fill="none" /></svg></button>
      <button class="flat" aria-label="Contraer"><svg width="6" height="8" viewBox="0 0 6 8"><path d="M3 1L1 4l2 3M5 1L3 4l2 3" fill="none" stroke="#3c4b55" /></svg></button>
      <div class="scroll">
        <button class="arrow" aria-label="Desplazar a la izquierda"><svg viewBox="0 0 4 6"><path d="M3 1L1 3l2 2" /></svg></button>
        <div class="track"><div class="thumb" /></div>
        <button class="arrow" aria-label="Desplazar a la derecha"><svg viewBox="0 0 4 6"><path d="M1 1l2 2-2 2" /></svg></button>
      </div>
      <div class="zoom">
        <button class="flat" aria-label="Deshacer"><svg width="14" height="12" viewBox="0 0 14 12"><path d="M3 5c5-2 8 0 8 5" fill="none" stroke="#5a96cd" stroke-width="2" /><path d="M1 5l4-4v7z" fill="#5a96cd" /></svg></button>
        <button class="flat" aria-label="Rehacer"><svg width="14" height="12" viewBox="0 0 14 12"><path d="M11 5c-5-2-8 0-8 5" fill="none" stroke="#5a96cd" stroke-width="2" /><path d="M13 5L9 1v7z" fill="#5a96cd" /></svg></button>
        <button class="flat" aria-label="Configuración"><svg width="14" height="13" viewBox="0 0 14 13"><path d="M8 1h4v11H8z" fill="#32c83c" /><path d="M2 6h3v6H2z" fill="#e63c46" /><path d="M3 11l7-8" stroke="#333" stroke-width="2.500" /><path d="M3 11l7-8" stroke="#fff" /></svg></button>
        <button class="flat" aria-label="Ajustar"><svg width="14" height="13" viewBox="0 0 14 13"><circle cx="6" cy="5" r="4" fill="#e6f0f5" stroke="#333" /><path d="M8 8l3 3" stroke="#222" stroke-width="2" /><path d="M12.500 1v8M11 3l1.500-2L14 3M11 7l1.500 2L14 7M1 12h7" stroke="#1e46e6" fill="none" /></svg></button>
        <button class="flat" aria-label="Alejar"><svg width="14" height="13" viewBox="0 0 14 13"><circle cx="5" cy="5" r="4" fill="#e6f0f5" stroke="#333" /><path d="M8 8l4 4" stroke="#222" stroke-width="2" /><path d="M3 5h4" stroke="#1414dc" stroke-width="1.500" /></svg></button>
        <button class="flat" aria-label="Acercar"><svg width="14" height="13" viewBox="0 0 14 13"><circle cx="5" cy="5" r="4" fill="#e6f0f5" stroke="#333" /><path d="M8 8l4 4" stroke="#222" stroke-width="2" /><path d="M3 5h4M5 3v4" stroke="#1414dc" stroke-width="1.500" /></svg></button>
        <button class="flat" aria-label="Opciones"><svg width="14" height="13" viewBox="0 0 14 13"><path d="M1 4h12" stroke="#222" stroke-width="2" stroke-dasharray="2 1" /><path d="M7 7v4M5 9l2 2 2-2" stroke="#1e64dc" stroke-width="1.500" fill="none" /></svg></button>
      </div>
    </footer>
  </div>
</template>

<style scoped>
.app { display: flex; flex-direction: column; min-height: 100vh; overflow: hidden; background: #9dbccb; color: #1b2226; font: bold 8px/10px "Liberation Sans", Arial, sans-serif; box-sizing: border-box; }
button, select { font: inherit; color: inherit; margin: 0; padding: 0; cursor: pointer; }
svg { display: block; flex: none; }
.flat { display: flex; align-items: center; justify-content: center; border: 0; background: none; }
.bar { display: flex; align-items: stretch; height: 18px; flex: none; box-sizing: border-box; border-top: 1px solid #5f8192; border-bottom: 1px solid #557482; border-left: 1px solid #5f8192; background: linear-gradient(#b8d4e2, #9bbdcc); }
.sep { width: 1px; flex: none; background: #708f9e; box-shadow: 1px 0 #c2d9e4; }
.candle-btn { width: 17px; }
.grip { width: 12px; }
.pick { position: relative; display: flex; align-items: center; }
.pick select { appearance: none; border: 0; background: none; width: 100%; height: 100%; padding-left: 4px; }
.pick .chev { position: absolute; right: 4px; top: 6px; pointer-events: none; }
.w-symbol { width: 51px; }
.w-unit { width: 39px; }
.w-amount { width: 68px; }
.chev { width: 6px; height: 4px; fill: none; stroke: #3a4d57; }
.chev.dark { stroke: #111; }
.group { display: flex; align-items: center; gap: 3px; padding: 0 2px 0 3px; }
.chip { height: 14px; box-sizing: border-box; border: 1px solid #7e9dab; border-radius: 2px; padding: 0 1px; background: #a9c6d4; }
.chip.on { background: #8ba1ad; border-color: #788f9b; }
.ind { gap: 4px; padding: 0 4px; }
.drop { width: 11px; }
.status { display: flex; align-items: center; gap: 3px; padding-left: 5px; }
.info { width: 9px; height: 9px; border: 1px solid #8fa3ad; background: #eef3f5; line-height: 7px; color: #666; }
.live { width: 5px; height: 5px; margin: 0 2px; border-radius: 50%; background: #469b0a; }
.gain { padding: 1px 2px; border-radius: 2px; background: #50dc50; color: #fff; font-weight: normal; }
.asset { padding: 0 2px; border: 1px solid #3c96c8; border-radius: 2px; background: #5ab9eb; font-weight: normal; }
.grow { flex: 1; }
.sync { width: 15px; }
.win { display: flex; align-items: center; width: 36px; justify-content: space-around; }
.win svg { width: 8px; height: 8px; fill: none; stroke: #6b8592; }
.body { display: flex; flex: 1; }
.side { display: flex; flex-direction: column; width: 23px; flex: none; box-sizing: border-box; border-left: 1px solid #5f8192; border-right: 1px solid #7e98a4; background: #9dbac8; }
.fold { height: 10px; flex: none; border: 0; border-bottom: 1px solid #7e98a4; display: flex; align-items: center; justify-content: center; }
.more { background: #bcd3dd; border-top: 1px solid #7e98a4; }
.tools { display: flex; flex-direction: column; flex: 1; }
.tool { flex: 1 0 0; display: flex; align-items: center; justify-content: center; overflow: hidden; border: 0; border-radius: 2px; background: none; }
.tool.on { box-shadow: inset 0 0 0 1px #71858f; background: #8aa1ac; }
.tip { height: 6px; flex: none; }
.tall { height: 26px; flex: none; }
.dots { height: 22px; flex: none; }
.charts { flex: 1; min-width: 0; }
.panel { position: relative; overflow: hidden; }
.plot { width: 100%; height: auto; font-size: 8px; font-weight: normal; }
.plot .b { font-weight: bold; }
.plot .mid { text-anchor: middle; }
.plot .small { font-size: 9px; }
.plot .big { font-size: 10px; }
.grid { stroke: #e9e9e9; stroke-dasharray: 1 2; fill: none; }
.grid.trace { stroke: #d7d7d7; }
.tags rect { fill: #fff; stroke: #7d949f; }
.heads { position: absolute; left: 0; top: 0; display: flex; }
.head { display: flex; align-items: center; gap: 3px; height: 14px; box-sizing: border-box; padding: 1px 2px 0; border: 0 solid #7d949f; border-width: 0 1px 1px 0; background: #c3d6df; color: #111; white-space: nowrap; }
.head.list { padding: 0 3px; }
.head input { appearance: none; width: 7px; height: 7px; margin: 0 0 0 1px; border: 1px solid #8a9ba4; background: #d8e4ea; }
.sw { width: 7px; height: 7px; background: #758d99; }
.sw.black { background: #000; }
.sw.half { background: linear-gradient(90deg, #777 40%, #000 40%); }
.sw.multi { background: linear-gradient(90deg, #000 20%, #1eb43c 20% 40%, #fa2828 40% 60%, #fff 60% 80%, #fa2828 80%); }
.close { width: 9px; height: 9px; border: 0; border-radius: 50%; background: #4673a5; color: #fff; line-height: 8px; }
.mini { width: 9px; height: 9px; border: 1px solid #9ab; background: #f5f8fa; font-size: 6px; line-height: 7px; }
.red { color: #e6141e; }
.green { color: #14a01e; }
h1 { position: absolute; left: 9px; top: 13px; margin: 0; font: bold 33px/37px "Liberation Sans", Arial, sans-serif; color: #000; }
.foot { display: flex; align-items: center; height: 16px; flex: none; box-sizing: border-box; border-top: 1px solid #7d949f; background: #a0bfcd; gap: 4px; }
.draw { width: 20px; height: 15px; background: #8aa4b1; }
.scroll { display: flex; flex: 1; align-items: stretch; height: 11px; }
.arrow { width: 11px; box-sizing: border-box; display: flex; align-items: center; justify-content: center; border: 1px solid #7593a1; background: #b8d0db; }
.arrow svg { width: 4px; height: 6px; fill: none; stroke: #111; }
.track { flex: 1; box-sizing: border-box; border: 1px solid #86a3b0; border-width: 1px 0; background: #93b2c0; }
.thumb { height: 100%; margin-left: 14%; background: linear-gradient(#b9d6e3, #9fc0cf); border-left: 1px solid #7593a1; }
.zoom { display: flex; gap: 4px; }
</style>

<style>
body { margin: 0; }
</style>
